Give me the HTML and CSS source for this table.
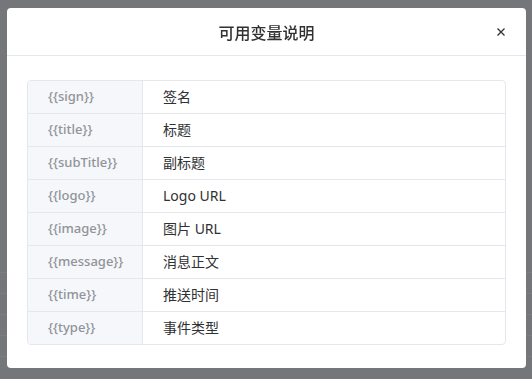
FILE: index.html
```html
<!DOCTYPE html>
<html lang="zh-CN">
<head>
    <meta charset="UTF-8">
    <meta name="viewport" content="width=device-width, initial-scale=1.0">
    <title>可用变量说明</title>
    <link rel="stylesheet" href="styles.css">
</head>
<body>
    <!-- page behind the dialog -->
    <div class="page">
        <div class="page-row"></div>
        <div class="page-row"></div>
        <div class="page-row"></div>
        <div class="page-row"></div>
        <div class="page-row"></div>
    </div>

    <div class="mask">
        <div class="dialog">
            <div class="dialog-header">
                <span class="dialog-title">可用变量说明</span>
                <button class="dialog-close" aria-label="关闭">
                    <svg width="8" height="8" viewBox="0 0 8 8">
                        <path d="M0.5 0.5L7.5 7.5M7.5 0.5L0.5 7.5" stroke="#303133" stroke-width="1.3" fill="none"/>
                    </svg>
                </button>
            </div>
            <div class="dialog-body">
                <table class="vars">
                    <tr><td class="key">{{sign}}</td><td class="val">签名</td></tr>
                    <tr><td class="key">{{title}}</td><td class="val">标题</td></tr>
                    <tr><td class="key">{{subTitle}}</td><td class="val">副标题</td></tr>
                    <tr><td class="key">{{logo}}</td><td class="val">Logo URL</td></tr>
                    <tr><td class="key">{{image}}</td><td class="val">图片 URL</td></tr>
                    <tr><td class="key">{{message}}</td><td class="val">消息正文</td></tr>
                    <tr><td class="key">{{time}}</td><td class="val">推送时间</td></tr>
                    <tr><td class="key">{{type}}</td><td class="val">事件类型</td></tr>
                </table>
            </div>
        </div>
    </div>
</body>
</html>
```

FILE: styles.css
```css
/* base */
body {
    margin: 0;
    padding: 0;
    font-family: "Noto Sans", "Noto Sans CJK SC", sans-serif;
    background: #ebedf2;
    overflow: hidden;
}

/* underlying page rows */
.page {
    padding-top: 252px;
}
.page-row {
    height: 20px;
    border-bottom: 1px solid #fafbfd;
}

/* overlay */
.mask {
    position: fixed;
    inset: 0;
    background: rgba(0, 0, 0, 0.5);
    padding: 8px 6px 0 7px;
}

.dialog {
    width: 519px;
    height: 360px;
    background: #fff;
    border-radius: 4px;
    box-sizing: border-box;
}

.dialog-header {
    height: 47px;
    border-bottom: 1px solid #e4e7ed;
    display: flex;
    align-items: center;
    justify-content: center;
    position: relative;
}
.dialog-title {
    font-size: 16px;
    font-weight: 500;
    color: #303133;
    padding-top: 1px;
}
.dialog-close {
    position: absolute;
    right: 21px;
    top: 20px;
    width: 8px;
    height: 8px;
    padding: 0;
    border: none;
    background: none;
    display: flex;
    cursor: pointer;
}

.dialog-body {
    padding: 24px 20px;
}

/* variables table */
.vars {
    width: 100%;
    table-layout: fixed;
    border-collapse: separate;
    border-spacing: 0;
    border: 1px solid #e4e7ed;
    border-radius: 4px;
    overflow: hidden;
}
.vars td {
    height: 33px;
    padding: 0 20px 2px;
    border-bottom: 1px solid #e4e7ed;
    box-sizing: border-box;
    white-space: nowrap;
}
.vars tr:last-child td {
    border-bottom: none;
    height: 32px;
}
.key {
    width: 115px;
    background: #f5f7fa;
    color: #909399;
    font-size: 13px;
    font-weight: 500;
    border-right: 1px solid #e4e7ed;
}
.val {
    color: #303133;
    font-size: 14px;
}
```
